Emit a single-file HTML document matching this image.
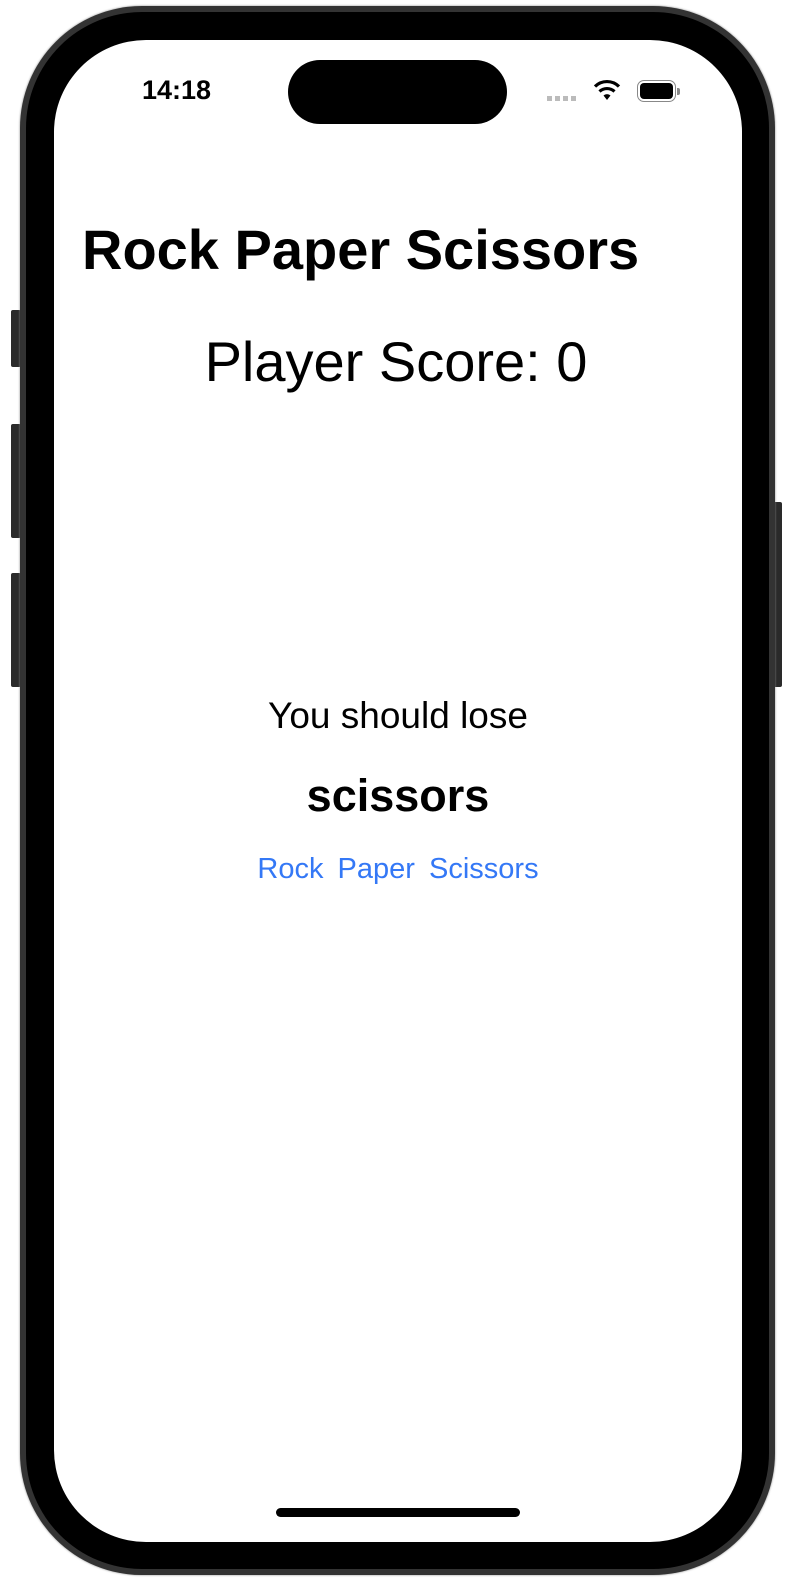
<!DOCTYPE html>
<html><head><style>
body{margin:0;width:800px;height:1580px;background:#fff;position:relative;overflow:hidden;font-family:"Liberation Sans",sans-serif}
.btn{position:absolute;background:#2a2a2a;border-radius:2px}
.outer{position:absolute;left:20px;top:6px;width:755px;height:1569px;border-radius:122px;background:#333;box-shadow:0 0 2px #888}
.inner{position:absolute;left:26px;top:12px;width:743px;height:1557px;border-radius:116px;background:#000}
.screen{position:absolute;left:54px;top:40px;width:688px;height:1502px;border-radius:92px;background:#fff;overflow:hidden}
.t{position:absolute;white-space:nowrap;line-height:1.15}
</style></head><body>
<div class="btn" style="left:11px;top:310px;width:10px;height:57px"></div>
<div class="btn" style="left:11px;top:424px;width:10px;height:114px"></div>
<div class="btn" style="left:11px;top:573px;width:10px;height:114px"></div>
<div class="btn" style="left:773px;top:502px;width:9px;height:185px"></div>
<div class="outer"></div><div class="inner"></div>
<div class="screen">
 <div class="t" style="left:88px;top:35px;font-size:27px;font-weight:bold">14:18</div>
 <div style="position:absolute;left:234px;top:20px;width:219px;height:64px;border-radius:32px;background:#000"></div>
 <div style="position:absolute;left:493px;top:56px;width:32px;height:5px;background:repeating-linear-gradient(90deg,#bbb 0 5px,transparent 5px 8px)"></div>
 <svg style="position:absolute;left:539px;top:39px" width="28" height="22" viewBox="0 0 28 22"><path d="M14 21L17.5 16.5A5 5 0 0 0 10.5 16.5Z" fill="#000"/><path d="M6.5 12.5A11 11 0 0 1 21.5 12.5" stroke="#000" stroke-width="3.2" fill="none"/><path d="M2 7.5A17 17 0 0 1 26 7.5" stroke="#000" stroke-width="3.2" fill="none"/></svg>
 <div style="position:absolute;left:583px;top:40px;width:39px;height:22px;border:1.5px solid #888;border-radius:7px;box-sizing:border-box"><div style="position:absolute;left:2px;top:2px;right:2px;bottom:2px;background:#000;border-radius:4px"></div></div>
 <div style="position:absolute;left:623px;top:48px;width:3px;height:7px;background:#888;border-radius:0 2px 2px 0"></div>
 <div class="t" style="left:28px;top:178px;font-size:56px;font-weight:bold">Rock Paper Scissors</div>
 <div class="t" style="left:-2px;width:688px;text-align:center;top:290px;font-size:56px">Player Score: 0</div>
 <div class="t" style="left:0;width:688px;text-align:center;top:655px;font-size:37px">You should lose</div>
 <div class="t" style="left:0;width:688px;text-align:center;top:730px;font-size:45px;font-weight:bold">scissors</div>
 <div class="t" style="left:0;width:688px;text-align:center;top:813px;font-size:29px;color:#3478f6;word-spacing:6px">Rock Paper Scissors</div>
 <div style="position:absolute;left:222px;top:1468px;width:244px;height:9px;border-radius:5px;background:#000"></div>
</div>
</body></html>
